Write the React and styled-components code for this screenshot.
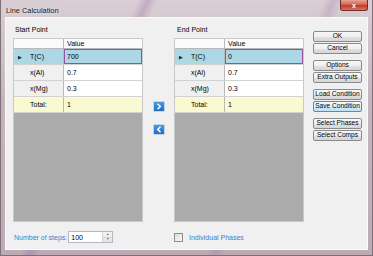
import React from 'react'
import styled, { createGlobalStyle } from 'styled-components'

const GlobalStyle = createGlobalStyle`
  html, body {
    margin: 0;
    padding: 0;
    background: #bfb1b8;
  }
  body {
    font-family: "Liberation Sans", Arial, sans-serif;
    font-size: 7px;
    color: #000;
  }
`

const Window = styled.div`
  width: 373px;
  height: 256px;
  box-sizing: border-box;
  display: flex;
  flex-direction: column;
  padding: 0 4px 5px 4px;
  border: 1px solid #7d7076;
  border-top: none;
  background:
    linear-gradient(115deg, transparent 28%, rgba(150, 110, 170, 0.35) 30%, transparent 32%),
    linear-gradient(115deg, transparent 66%, rgba(150, 110, 170, 0.25) 68%, transparent 70%),
    linear-gradient(#d8ced3, #c4b5bc 40%, #bcabb4);
`

const TitleBar = styled.div`
  height: 17px;
  display: flex;
  align-items: flex-start;
  justify-content: space-between;
`

const Title = styled.div`
  padding: 6px 0 0 1px;
  font-size: 7.4px;
  color: #1a1a1a;
  text-shadow: 0 0 4px rgba(255, 255, 255, 0.9);
`

const CloseButton = styled.div`
  width: 26px;
  height: 10px;
  border: 1px solid #6e2c2c;
  border-top: none;
  border-radius: 0 0 3px 3px;
  background: linear-gradient(#e8a394, #d45d4c 50%, #c0392b 55%, #d8775f);
  display: flex;
  align-items: center;
  justify-content: center;
  color: #fff;
  font-size: 7px;
  font-weight: bold;
  line-height: 1;
`

const Client = styled.div`
  flex: 1;
  display: flex;
  background: #f0f0f0;
  border: 1px solid rgba(255, 255, 255, 0.75);
  padding: 0 5px 0 7px;
  box-sizing: border-box;
`

const Main = styled.div`
  display: flex;
  flex-direction: column;
`

const TopRow = styled.div`
  display: flex;
`

const Panel = styled.div`
  width: 130px;
  display: flex;
  flex-direction: column;
`

const PanelLabel = styled.div`
  height: 20px;
  box-sizing: border-box;
  padding: 8px 0 0 ${(p) => p.$indent || 2}px;
  line-height: 8px;
`

const GridBox = styled.div`
  height: 184px;
  box-sizing: border-box;
  background: #ababab;
  border: 1px solid #c9c9c9;
  display: flex;
  flex-direction: column;
`

const Row = styled.div`
  display: flex;
  height: 16px;
  box-sizing: border-box;
  border-bottom: 1px solid #d2d2d2;
  background: ${(p) =>
    p.$selected ? '#acd8e5' : p.$total ? '#fafad2' : '#f0f0f0'};
`

const HeaderRow = styled(Row)`
  height: 10px;
  background: #fbfbfb;
  border-bottom: 1px solid #b9b9b9;
`

const LabelCell = styled.div`
  width: 50px;
  box-sizing: border-box;
  display: flex;
  align-items: center;
  border-right: 1px solid #b9b9b9;
  padding-left: 4px;
`

const RowMarker = styled.span`
  width: 12px;
  font-size: 5px;
  color: #222;
`

const ValueCell = styled.div`
  flex: 1;
  display: flex;
  align-items: center;
  padding-left: 3px;
  background: ${(p) => (p.$selected || p.$total ? 'transparent' : '#fff')};
  box-shadow: ${(p) => (p.$focused ? 'inset 0 0 0 1px #9a4fa6' : 'none')};
`

const HeadCell = styled(ValueCell)`
  background: transparent;
  padding-left: 3px;
`

const ArrowColumn = styled.div`
  width: 31px;
  display: flex;
  flex-direction: column;
  align-items: center;
  padding-top: 83px;
  gap: 12px;
`

const ArrowButton = styled.div`
  width: 12px;
  height: 11px;
  box-sizing: border-box;
  border: 1px solid #c7d3de;
  border-radius: 1px;
  background: linear-gradient(#4a9be0, #1e6fc0);
  display: flex;
  align-items: center;
  justify-content: center;
`

const ButtonColumn = styled.div`
  width: 50px;
  margin-left: 9px;
  padding-top: 13px;
  display: flex;
  flex-direction: column;
  gap: 6px;
`

const ButtonGroup = styled.div`
  display: flex;
  flex-direction: column;
  gap: 1px;
`

const Button = styled.div`
  height: 11px;
  box-sizing: border-box;
  border: 1px solid ${(p) => (p.$hover ? '#4f8fc4' : '#8a8a8a')};
  border-radius: 2px;
  background: ${(p) =>
    p.$hover
      ? 'linear-gradient(#f3f9fd, #e4f3fc 50%, #cfeafa 51%, #bde2f7)'
      : 'linear-gradient(#f8f8f8, #efefef 50%, #e2e2e2 51%, #d6d6d6)'};
  display: flex;
  align-items: center;
  justify-content: center;
  font-size: 6.6px;
  line-height: 1;
  white-space: nowrap;
`

const Footer = styled.div`
  display: flex;
  align-items: center;
  margin-top: 9px;
  height: 12px;
`

const StepsArea = styled.div`
  width: 160px;
  display: flex;
  align-items: center;
  gap: 1px;
  padding-left: 1px;
`

const BlueLabel = styled.span`
  color: #3a7fd6;
`

const SpinBox = styled.div`
  width: 45px;
  height: 12px;
  box-sizing: border-box;
  border: 1px solid #b5b8bf;
  background: #fff;
  display: flex;
`

const SpinText = styled.div`
  flex: 1;
  padding-left: 2px;
  display: flex;
  align-items: center;
`

const Spinner = styled.div`
  width: 9px;
  border-left: 1px solid #d5d5d5;
  display: flex;
  flex-direction: column;
  background: linear-gradient(#f4f4f4, #e4e4e4);
`

const SpinHalf = styled.div`
  flex: 1;
  display: flex;
  align-items: center;
  justify-content: center;
  font-size: 3px;
  color: #555;
  line-height: 1;
  & + & {
    border-top: 1px solid #d5d5d5;
  }
`

const CheckArea = styled.div`
  display: flex;
  align-items: center;
  gap: 6px;
`

const CheckBox = styled.div`
  width: 9px;
  height: 9px;
  box-sizing: border-box;
  border: 1px solid #8f8f8f;
  background: linear-gradient(135deg, #dcdcdc, #f8f8f8);
`

const Chevron = ({ dir }) => (
  <svg width="6" height="7" viewBox="0 0 6 7">
    <path
      d={dir === 'right' ? 'M1.5 0.8 L4.3 3.5 L1.5 6.2' : 'M4.5 0.8 L1.7 3.5 L4.5 6.2'}
      fill="none"
      stroke="#fff"
      strokeWidth="1.5"
    />
  </svg>
)

const DataGrid = ({ rows }) => (
  <GridBox>
    <HeaderRow>
      <LabelCell />
      <HeadCell>Value</HeadCell>
    </HeaderRow>
    {rows.map((r, i) => (
      <Row key={r.label} $selected={i === 0} $total={r.total}>
        <LabelCell>
          <RowMarker>{i === 0 ? '▶' : ''}</RowMarker>
          {r.label}
        </LabelCell>
        <ValueCell $selected={i === 0} $total={r.total} $focused={i === 0}>
          {r.value}
        </ValueCell>
      </Row>
    ))}
  </GridBox>
)

const startRows = [
  { label: 'T(C)', value: '700' },
  { label: 'x(Al)', value: '0.7' },
  { label: 'x(Mg)', value: '0.3' },
  { label: 'Total:', value: '1', total: true },
]

const endRows = [
  { label: 'T(C)', value: '0' },
  { label: 'x(Al)', value: '0.7' },
  { label: 'x(Mg)', value: '0.3' },
  { label: 'Total:', value: '1', total: true },
]

const buttonGroups = [
  ['OK', 'Cancel'],
  ['Options', 'Extra Outputs'],
  ['Load Condition', 'Save Condition'],
  ['Select Phases', 'Select Comps'],
]

const App = () => {
  return (
    <>
      <GlobalStyle />
      <Window>
        <TitleBar>
          <Title>Line Calculation</Title>
          <CloseButton>x</CloseButton>
        </TitleBar>
        <Client>
          <Main>
            <TopRow>
              <Panel>
                <PanelLabel $indent={2}>Start Point</PanelLabel>
                <DataGrid rows={startRows} />
              </Panel>
              <ArrowColumn>
                <ArrowButton><Chevron dir="right" /></ArrowButton>
                <ArrowButton><Chevron dir="left" /></ArrowButton>
              </ArrowColumn>
              <Panel>
                <PanelLabel $indent={3}>End Point</PanelLabel>
                <DataGrid rows={endRows} />
              </Panel>
            </TopRow>
            <Footer>
              <StepsArea>
                <BlueLabel>Number of steps:</BlueLabel>
                <SpinBox>
                  <SpinText>100</SpinText>
                  <Spinner>
                    <SpinHalf>▲</SpinHalf>
                    <SpinHalf>▼</SpinHalf>
                  </Spinner>
                </SpinBox>
              </StepsArea>
              <CheckArea>
                <CheckBox />
                <BlueLabel>Individual Phases</BlueLabel>
              </CheckArea>
            </Footer>
          </Main>
          <ButtonColumn>
            {buttonGroups.map((group) => (
              <ButtonGroup key={group[0]}>
                {group.map((label) => (
                  <Button key={label} $hover={label === 'Save Condition'}>
                    {label}
                  </Button>
                ))}
              </ButtonGroup>
            ))}
          </ButtonColumn>
        </Client>
      </Window>
    </>
  )
}

export default App
